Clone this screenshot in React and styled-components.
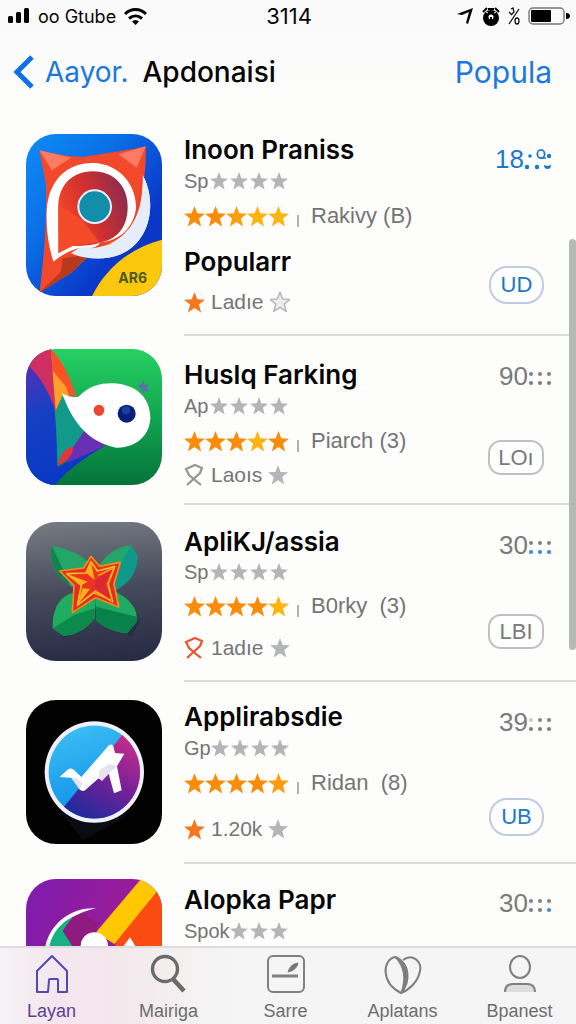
import React from "react";
import styled, { createGlobalStyle } from "styled-components";

const GlobalStyle = createGlobalStyle`
    * {
        box-sizing: border-box;
    }
    body {
        margin: 0;
        background: #fdfdfc;
        font-family: Inter, "Liberation Sans", sans-serif;
        color: #050505;
    }
    h1, h2, h3, p {
        margin: 0;
    }
    button {
        font: inherit;
        cursor: pointer;
    }
    a {
        text-decoration: none;
    }
    svg {
        display: block;
        flex: none;
    }
`;

const Screen = styled.div`
    display: flex;
    flex-direction: column;
    height: 100vh;
    position: relative;
    overflow: hidden;
`;

const StatusBar = styled.div`
    display: grid;
    grid-template-columns: 1fr auto 1fr;
    align-items: center;
    height: 32px;
    padding: 0 6px 0 8px;
    font-size: 18px;
    background: #fafafa;

    time {
        font-size: 22px;
    }
`;

const StatusGroup = styled.div`
    display: flex;
    align-items: center;
    gap: 8px;
    justify-content: ${(props) => props.$end ? "flex-end" : "flex-start"};
`;

const NavBar = styled.header`
    display: flex;
    align-items: center;
    height: 80px;
    padding: 0 24px 0 13px;
    font-size: 28px;
    background: linear-gradient(#fafafa, #fdfdfc);

    h1 {
        font-size: 28px;
        font-weight: 500;
        margin-left: 14px;
    }
`;

const NavLink = styled.a`
    display: flex;
    align-items: center;
    gap: 10px;
    color: #1b78dc;
    font-size: ${(props) => props.$big ? "30px" : "28px"};
    margin-left: ${(props) => props.$big ? "auto" : "0"};
`;

const List = styled.main`
    flex: 1;
    min-height: 0;
    overflow: hidden;
`;

const Row = styled.article`
    display: flex;
    height: ${(props) => props.$height}px;
    padding-left: 26px;
`;

const AppIcon = styled.svg`
    width: 136px;
    height: ${(props) => props.$height}px;
    margin-top: ${(props) => props.$top}px;
    border-radius: 30px;
`;

const Content = styled.div`
    display: flex;
    flex: 1;
    margin-left: 22px;
    border-bottom: 2px solid #dcdcdd;
    font-family: "Liberation Sans", Arial, sans-serif;
`;

const Info = styled.div`
    flex: 1;
    padding-top: ${(props) => props.$top}px;
    color: #747474;
    font-size: 22px;

    h2, h3 {
        font-family: Inter, "Liberation Sans", sans-serif;
        font-size: 26px;
        font-weight: 600;
        line-height: 32px;
        color: #050505;
        white-space: nowrap;
    }
    h3 {
        line-height: 52px;
    }
`;

const Genre = styled.div`
    display: flex;
    align-items: center;
    justify-content: space-between;
    width: 104px;
    height: ${(props) => props.$tight ? "28px" : "30px"};
    font-size: 20px;
`;

const Stars = styled.div`
    display: flex;
    gap: ${(props) => props.$gap}px;
`;

const Rating = styled.div`
    display: flex;
    align-items: center;
    height: 40px;
    white-space: pre;
`;

const Tick = styled.span`
    width: 2px;
    height: 12px;
    margin: 10px 12px 0 8px;
    background: #b0b0b0;
`;

const Foot = styled.div`
    display: flex;
    align-items: center;
    gap: 6px;
    width: 104px;
    height: 28px;
    margin-top: ${(props) => props.$top}px;
    font-size: 21px;

    svg:last-child {
        margin-left: auto;
    }
`;

const Side = styled.div`
    display: flex;
    flex-direction: column;
    align-items: flex-end;
    justify-content: space-between;
    padding: ${(props) => props.$top}px 24px ${(props) => props.$bottom}px 0;
`;

const Price = styled.div`
    display: flex;
    align-items: center;
    height: 32px;
    font-size: 26px;
    color: ${(props) => props.$blue ? "#1b78d0" : "#7a7a7a"};
`;

const GetButton = styled.button`
    width: ${(props) => props.$blue ? "55px" : "56px"};
    height: ${(props) => props.$blue ? "38px" : "35px"};
    margin-right: 8px;
    padding: 0;
    border: 2px solid ${(props) => props.$blue ? "#bfcbe0" : "#c0c0c0"};
    border-radius: ${(props) => props.$blue ? "18px" : "13px"};
    background: #fff;
    color: ${(props) => props.$blue ? "#1b78c8" : "#7a7a7a"};
    font-size: 22px;
    line-height: 30px;
`;

const ScrollThumb = styled.div`
    position: absolute;
    top: 239px;
    right: 0;
    width: 7px;
    height: 411px;
    border-radius: 4px;
    background: #b7b9b9;
`;

const TabBar = styled.nav`
    height: 78px;
    border-top: 2px solid #dddcde;
    background: linear-gradient(90deg, #f5f2f5 0%, #f4e6ee 10%, #f3e7ec 20%, #f3efef 30%, #f5f5f5 40%);
    overflow: hidden;
`;

const Tabs = styled.div`
    display: grid;
    grid-template-columns: repeat(5, 1fr);
    margin: 0 -2px 0 -7px;
`;

const Tab = styled.a`
    display: flex;
    flex-direction: column;
    align-items: center;
    gap: 4px;
    padding-top: 6px;
    font-family: "Liberation Sans", Arial, sans-serif;
    font-size: 18px;
    line-height: 22px;
    color: ${(props) => props.$active ? "#5a4290" : "#6d6d6d"};
`;

const STAR = "M12 1 L14.9 8.7 L23 9.1 L16.7 14.2 L18.9 22.4 L12 17.8 L5.1 22.4 L7.3 14.2 L1 9.1 L9.1 8.7 Z";

function Star({ size, color, outline }) {
    return (
        <svg width={size} height={size} viewBox="1 1 22 22" aria-hidden="true">
            <path d={STAR} fill={outline ? "#ececec" : color} stroke={outline ? color : "none"} strokeWidth="1.6" />
        </svg>
    )
}

function Ribbon({ color }) {
    return (
        <svg width="21" height="24" viewBox="0 0 21 24" fill="none" stroke={color} strokeWidth="2.2" aria-hidden="true">
            <path d="M3 22 L16 10 L18 5 L11 2 L2 6 L5 12 L17 22" />
        </svg>
    )
}

// the six little dots after the number
function Dots({ top, bottom }) {
    return (
        <svg width="24" height="20" viewBox="0 0 24 20" aria-hidden="true">
            {[3, 12, 21].map((x, i) => <circle key={x} cx={x} cy="8" r="2" fill={top[i]} />)}
            {[3, 12, 21].map((x, i) => <circle key={x} cx={x} cy="17" r="2.1" fill={bottom[i]} />)}
        </svg>
    )
}

function PercentDots() {
    return (
        <svg width="28" height="24" viewBox="0 0 28 24" fill="#1b78d0" aria-hidden="true">
            <circle cx="3" cy="20" r="2.2" />
            <circle cx="6" cy="9" r="1.8" />
            <circle cx="13" cy="20" r="2.2" />
            <ellipse cx="17" cy="7" rx="3.6" ry="4.2" fill="none" stroke="#1b78d0" strokeWidth="1.8" />
            <path d="M17 11 H22" stroke="#1b78d0" strokeWidth="1.6" />
            <circle cx="25" cy="9" r="2.2" />
            <path d="M20 18 L23 19 L27 18 a3.5 4 0 0 1 -7 0z" />
        </svg>
    )
}

function PinArt() {
    return (
        <>
            <defs>
                <linearGradient id="pinSky" x1="0" y1="0" x2="1" y2="1">
                    <stop offset="0" stopColor="#0d8df5" />
                    <stop offset="0.35" stopColor="#0a6fe6" />
                    <stop offset="0.7" stopColor="#0a38c8" />
                    <stop offset="1" stopColor="#0a34b8" />
                </linearGradient>
                <linearGradient id="pinRed" x1="0" y1="0.7" x2="1" y2="0.3">
                    <stop offset="0" stopColor="#fa4a28" />
                    <stop offset="0.5" stopColor="#d03030" />
                    <stop offset="1" stopColor="#8e2c4c" />
                </linearGradient>
            </defs>
            <rect x="30" y="27" width="408" height="486" fill="url(#pinSky)" />
            <path d="M380 150 C430 240 400 390 262 400 C220 402 190 392 165 380 L300 340 Z" fill="#e6edfa" />
            <path d="M70 76 C110 86 160 96 200 96 C260 86 330 78 389 64 C390 110 388 150 378 190 C375 290 320 350 225 386 L170 440 L70 503 C84 400 92 300 90 180 Z" fill="#f2492a" />
            <path d="M70 76 L165 98 L108 136 Z M389 64 L308 88 L362 128 Z" fill="#ff7a62" />
            <path d="M70 503 L140 400 L220 388 L170 440 Z" fill="#b83a1c" />
            <path d="M70 503 L108 410 L140 400 L135 440 Z" fill="#f2492a" />
            <path d="M165 384 L205 360 C290 376 345 340 368 262 C374 230 380 200 380 150 C430 240 400 390 262 400 C220 402 190 396 165 384 Z" fill="#e6edfa" />
            <path d="M112 410 C100 370 90 320 92 260 C96 160 160 112 232 114 C310 116 362 180 360 250 C358 330 290 366 225 366 C190 364 150 378 112 410 Z" fill="#fff" />
            <path d="M255 352 C310 340 335 300 335 245 C335 180 290 139 232 139 C165 139 125 185 127 250 L128 384 L170 362 C200 364 230 362 255 352 Z" fill="url(#pinRed)" />
            <path d="M127 240 L127 384 L170 362 L250 352 L200 285 Z" fill="#f54a2a" />
            <path d="M252 352 C310 348 355 310 362 240 L379 150 C385 280 330 360 225 370 C240 366 250 360 252 352 Z" fill="#ed4422" />
            <circle cx="236" cy="245" r="49" fill="#128daa" stroke="#e9f1ff" strokeWidth="6" />
            <path d="M228 513 C270 430 340 370 438 344 V513 Z" fill="#fcc80e" />
            <text x="350" y="473" textAnchor="middle" fontSize="42" fontWeight="700" fill="#4d5a1c">AR6</text>
        </>
    )
}

function BirdArt() {
    return (
        <>
            <defs>
                <linearGradient id="birdGreen" x1="0.5" y1="0" x2="0.5" y2="1">
                    <stop offset="0" stopColor="#27d063" />
                    <stop offset="0.5" stopColor="#12a550" />
                    <stop offset="1" stopColor="#04743a" />
                </linearGradient>
                <linearGradient id="birdBlue" x1="0" y1="0" x2="0.2" y2="1">
                    <stop offset="0" stopColor="#6a2cb0" />
                    <stop offset="0.5" stopColor="#1440c4" />
                    <stop offset="1" stopColor="#0a38c4" />
                </linearGradient>
            </defs>
            <rect x="30" y="27" width="408" height="408" fill="url(#birdGreen)" />
            <path d="M30 27 H104 L128 380 L175 350 L268 318 C210 350 160 385 116 435 H30 Z" fill="url(#birdBlue)" />
            <path d="M40 80 C54 50 74 30 104 27 L120 215 C100 160 75 110 40 80 Z" fill="#cf3061" />
            <path d="M104 27 C140 60 160 110 182 172 L140 160 L120 215 Z" fill="#fa5226" />
            <path d="M110 92 L150 140 L160 170 L140 165 L119 210 Z" fill="#ffa02a" />
            <path d="M120 215 L140 170 L205 272 L172 320 L124 378 Z" fill="#12998a" />
            <path d="M205 272 L268 318 L150 370 L172 320 Z" fill="#6830b4" />
            <path d="M124 378 C132 345 148 322 172 320 C172 345 150 365 124 378 Z" fill="#e3343a" />
            <path d="M138 160 C160 172 174 173 188 170 C220 135 260 128 295 130 C370 136 403 180 403 235 C400 295 350 325 300 323 C210 305 168 240 138 160 Z" fill="#fff" />
            <ellipse cx="249" cy="211" rx="16" ry="17" fill="#ef4535" />
            <circle cx="332" cy="221" r="27" fill="#08207c" />
            <circle cx="330" cy="211" r="12" fill="#1b40a0" />
            <path d="M364 134 L374 135 L382 121 L386 134 L398 132 L392 143 L400 155 L386 153 L378 160 L376 148 Z" fill="#5a72a8" />
        </>
    )
}

function FlowerArt() {
    return (
        <>
            <defs>
                <linearGradient id="slate" x1="0.4" y1="0" x2="0.5" y2="1">
                    <stop offset="0" stopColor="#747880" />
                    <stop offset="0.5" stopColor="#454a5b" />
                    <stop offset="1" stopColor="#272b45" />
                </linearGradient>
            </defs>
            <rect x="30" y="21" width="408" height="417" fill="url(#slate)" />
            <path d="M115 280 L140 372 L240 300 L345 365 L372 318 L300 240 Z" fill="#20243a" opacity="0.5" />
            <path d="M108 93 C150 100 195 115 225 150 L240 210 L165 215 C120 180 98 150 108 93 Z" fill="#23a768" />
            <path d="M108 93 L165 215 C120 180 98 150 108 93 Z" fill="#128350" />
            <path d="M345 91 L365 124 C362 170 345 200 300 225 L235 215 L250 150 C275 115 305 95 345 91 Z" fill="#24a668" />
            <path d="M345 91 L365 124 C362 170 345 200 300 225 L290 190 Z" fill="#0e998a" />
            <path d="M165 235 L240 250 L236 310 C210 345 175 360 143 363 L110 340 C108 290 125 250 165 235 Z" fill="#20ad62" />
            <path d="M110 340 L175 300 L236 280 L236 310 C210 345 175 360 143 363 Z" fill="#0b8a4b" />
            <path d="M240 240 L300 230 C345 255 365 280 362 320 L334 355 C290 350 260 335 240 315 Z" fill="#20ab62" />
            <path d="M240 275 L362 305 V320 L334 355 C290 350 260 335 240 315 Z" fill="#08824a" />
            <path d="M225 124 L251 154 L313 142 L294 207 L308 276 L239 248 L169 293 L174 211 L131 168 L203 159 Z" fill="#df3023" stroke="#f98b14" strokeWidth="5" strokeLinejoin="round" />
            <path d="M225 140 L244 168 L296 155 L276 207 L290 260 L238 229 L184 271 L196 211 L152 176 L210 174 Z" fill="#e83420" stroke="#ffc222" strokeWidth="5" strokeLinejoin="round" />
            <path d="M225 140 L236 195 L212 175 Z M152 176 L215 200 L196 211 Z M184 271 L222 222 L200 220 Z" fill="#fdaf18" />
            <path d="M240 195 L290 160 L265 210 L290 260 L235 215 Z" fill="#dc2830" />
            <path d="M246 182 L291 159 M234 234 L285 255" stroke="#ff9d16" strokeWidth="5" />
        </>
    )
}

function PlaneArt() {
    return (
        <>
            <defs>
                <linearGradient id="planeSky" x1="0" y1="0" x2="0.3" y2="1">
                    <stop offset="0" stopColor="#43c4f5" />
                    <stop offset="1" stopColor="#0a8de8" />
                </linearGradient>
                <linearGradient id="planeNight" x1="0.8" y1="0" x2="0.3" y2="1">
                    <stop offset="0.1" stopColor="#cf2f88" />
                    <stop offset="0.55" stopColor="#7a2098" />
                    <stop offset="1" stopColor="#1c2a9c" />
                </linearGradient>
                <clipPath id="planeDisc"><ellipse cx="235" cy="245" rx="137" ry="140" /></clipPath>
            </defs>
            <rect x="30" y="28" width="408" height="434" fill="#020203" />
            <path d="M130 360 L200 450 L330 380 L235 245 Z" fill="#0a0c14" />
            <ellipse cx="235" cy="245" rx="149" ry="153" fill="#f0effa" />
            <g clipPath="url(#planeDisc)">
                <rect x="90" y="90" width="290" height="310" fill="url(#planeSky)" />
                <path d="M322 130 L140 355 L200 400 H400 V90 Z" fill="url(#planeNight)" />
            </g>
            <path d="M131 260 L157 236 Q165 232 174 239 L196 260 L278 165 Q288 158 292 168 L297 188 L325 190 L303 228 L317 300 L294 309 L278 250 L258 271 L248 264 L208 299 Q200 306 191 298 L166 262 Z" fill="#fff" />
            <path d="M250 240 L280 220 L303 228 L278 250 L258 271 L248 264 Z M166 262 L180 262 L200 280 L191 298 Z" fill="#e6e2f0" />
        </>
    )
}

function CanvasArt() {
    return (
        <>
            <defs>
                <linearGradient id="canvasViolet" x1="0" y1="0" x2="1" y2="0.5">
                    <stop offset="0" stopColor="#7c1cb0" />
                    <stop offset="1" stopColor="#a81c8c" />
                </linearGradient>
            </defs>
            <rect x="30" y="567" width="408" height="408" fill="url(#canvasViolet)" />
            <path d="M438 585 V975 H280 L300 740 Z" fill="#fa4b10" />
            <path d="M375 567 H400 L422 605 L295 762 L240 727 Z" fill="#ffc800" />
            <path d="M86 785 C90 720 150 650 240 655 C190 665 160 685 140 722 L120 785 Z" fill="#fff" />
            <path d="M98 785 C100 740 130 700 170 680 L140 722 L180 785 Z" fill="#17b184" />
            <path d="M170 680 L200 668 L245 700 L240 735 L190 785 H180 L140 722 Z" fill="#8f1a80" />
            <circle cx="235" cy="768" r="41" fill="#fff" />
            <path d="M310 785 L342 742 L368 785 Z" fill="#fff" />
        </>
    )
}

const GRAY = "#808080";
const BLUE = "#4488d4";
const ORANGE = "#fb8c0a";
const YELLOW = "#fdb40e";

const apps = [
    {
        title: "Inoon Praniss", genre: "Sp", grayStars: 4, rated: "Rakivy (B)", stars: [ORANGE, ORANGE, "#fc9f0c", YELLOW, YELLOW],
        tagline: "Popularr", mark: "star", note: "Ladıe", price: "18", button: "UD", buttonBlue: true, noteOutline: true,
        art: PinArt, viewBox: "30 27 408 486", height: 224, iconTop: 22, iconHeight: 162, infoTop: 22, sideTop: 31, sideBottom: 30, footTop: 0,
    },
    {
        title: "Huslq Farking", genre: "Ap", grayStars: 4, rated: "Piarch (3)", stars: [ORANGE, ORANGE, ORANGE, YELLOW, ORANGE],
        mark: "#959595", note: "Laoıs", price: "90", dots: [[GRAY, GRAY, GRAY], [GRAY, GRAY, GRAY]], button: "LOı",
        art: BirdArt, viewBox: "30 27 408 408", height: 169, iconTop: 13, iconHeight: 136, infoTop: 23, sideTop: 24, sideBottom: 28, footTop: 0,
    },
    {
        title: "ApliKJ/assia", genre: "Sp", grayStars: 4, rated: "B0rky  (3)", stars: [ORANGE, ORANGE, ORANGE, ORANGE, YELLOW], tight: true,
        mark: "#e4572f", note: "1adıe", price: "30", dots: [[GRAY, GRAY, GRAY], [BLUE, BLUE, BLUE]], button: "LBI",
        art: FlowerArt, viewBox: "30 21 408 417", height: 177, iconTop: 17, iconHeight: 139, infoTop: 21, sideTop: 24, sideBottom: 31, footTop: 8,
    },
    {
        title: "Applirabsdie", genre: "Gp", grayStars: 4, rated: "Ridan  (8)", stars: [ORANGE, ORANGE, ORANGE, ORANGE, "#fd9d0c"],
        mark: "star", note: "1.20k", price: "39", dots: [["#ccc", GRAY, GRAY], [GRAY, GRAY, GRAY]], button: "UB", buttonBlue: true,
        art: PlaneArt, viewBox: "30 28 408 434", height: 182, iconTop: 18, iconHeight: 144, infoTop: 19, sideTop: 24, sideBottom: 26, footTop: 12,
    },
    {
        title: "Alopka Papr", genre: "Spok", grayStars: 3, price: "30", dots: [[GRAY, GRAY, GRAY], [GRAY, GRAY, BLUE]],
        art: CanvasArt, viewBox: "30 567 408 408", height: 169, iconTop: 15, iconHeight: 136, infoTop: 20, sideTop: 23, sideBottom: 28, footTop: 0,
    },
];

function AppRow({ app }) {
    const Art = app.art
    return (
        <Row $height={app.height}>
            <AppIcon viewBox={app.viewBox} preserveAspectRatio="none" $height={app.iconHeight} $top={app.iconTop} aria-hidden="true">
                <Art />
            </AppIcon>
            <Content>
                <Info $top={app.infoTop}>
                    <h2>{app.title}</h2>
                    <Genre $tight={app.tight}>
                        <span>{app.genre}</span>
                        <Stars $gap={2}>
                            {Array.from({ length: app.grayStars }, (_, i) => <Star key={i} size={18} color="#b4b5b7" />)}
                        </Stars>
                    </Genre>
                    {app.rated && (
                        <Rating>
                            <Stars $gap={0}>
                                {app.stars.map((color, i) => <Star key={i} size={21} color={color} />)}
                            </Stars>
                            <Tick />
                            <span>{app.rated}</span>
                        </Rating>
                    )}
                    {app.tagline && <h3>{app.tagline}</h3>}
                    {app.note && (
                        <Foot $top={app.footTop}>
                            {app.mark === "star" ? <Star size={21} color="#f6781e" /> : <Ribbon color={app.mark} />}
                            <span>{app.note}</span>
                            <Star size={20} color="#b4b5b7" outline={app.noteOutline} />
                        </Foot>
                    )}
                </Info>
                <Side $top={app.sideTop} $bottom={app.sideBottom}>
                    <Price $blue={!app.dots}>
                        <span>{app.price}</span>
                        {app.dots ? <Dots top={app.dots[0]} bottom={app.dots[1]} /> : <PercentDots />}
                    </Price>
                    {app.button && <GetButton $blue={app.buttonBlue}>{app.button}</GetButton>}
                </Side>
            </Content>
        </Row>
    )
}

function Status() {
    return (
        <StatusBar>
            <StatusGroup>
                <svg width="22" height="16" viewBox="0 0 22 16" aria-hidden="true">
                    <rect x="0" y="8" width="5" height="7" rx="1.5" />
                    <rect x="8" y="4" width="5" height="11" rx="1.5" />
                    <rect x="16" y="0" width="5" height="15" rx="1.5" />
                </svg>
                <span>oo Gtube</span>
                <svg width="23" height="17" viewBox="0 0 23 17" fill="none" stroke="#000" strokeWidth="3" aria-hidden="true">
                    <path d="M1 6 C7 0 16 0 22 6" />
                    <path d="M5 10.5 C9 7 14 7 18 10.5" />
                    <path d="M8 13.5 Q11.500 10.500 15 13.500 L11.500 17Z" fill="#000" stroke="none" />
                </svg>
            </StatusGroup>
            <time>3114</time>
            <StatusGroup $end>
                <svg width="18" height="18" viewBox="0 0 18 18" aria-hidden="true">
                    <path d="M1 7 L17 1 L12 17 L10 16 L13 5 L6 8 Z" />
                </svg>
                <svg width="18" height="19" viewBox="0 0 18 19" aria-hidden="true">
                    <circle cx="9" cy="11" r="8" />
                    <path d="M1 5 L5 1 M17 5 L13 1 M6 2 L12 2" stroke="#000" strokeWidth="2" />
                    <circle cx="9" cy="10" r="2.5" fill="#fff" />
                    <path d="M4 5 L6 6 M14 5 L12 6" stroke="#fff" />
                    <rect x="8" y="10" width="2" height="3" />
                </svg>
                <svg width="12" height="19" viewBox="0 0 12 19" fill="none" stroke="#111" strokeWidth="1.3" aria-hidden="true">
                    <path d="M11 2 L1 17 M1 5 L4 8 M3 2 L5 1 L6 5 L3 8" />
                    <ellipse cx="9" cy="14" rx="2" ry="3" />
                </svg>
                <svg width="42" height="18" viewBox="0 0 42 18" aria-hidden="true">
                    <rect x="1" y="1" width="35" height="16" rx="4" fill="none" stroke="#777" strokeWidth="1.4" />
                    <rect x="3" y="3" width="20" height="12" rx="1" />
                    <path d="M38 6 Q42 6 42 9 Q42 12 38 12Z" />
                </svg>
            </StatusGroup>
        </StatusBar>
    )
}

const tabs = [
    {
        label: "Layan", active: true,
        icon: <path d="M3 17 L18 2 L33 17 V38 H24 V26 Q24 25 23 25 H16 Q15 25 15 26 L14 38 H3 Z" strokeLinejoin="round" />,
    },
    {
        label: "Mairiga",
        icon: <g strokeWidth="3.4" stroke="#6b6b6b"><circle cx="14" cy="15" r="12.5" /><path d="M22 25 L33 37" strokeWidth="4.6" /></g>,
    },
    {
        label: "Sarre",
        icon: <><rect x="0" y="2" width="36" height="36" rx="5" /><path d="M4 22 H30" strokeWidth="3" /><path d="M20 18 Q22 10 30 9 Q29 16 20 18Z" fill="#777" strokeWidth="1" /></>,
    },
    {
        label: "Aplatans",
        icon: <><path d="M10 3 C-3 6 -4 29 16 39 C26 27 25 10 10 3 Z" /><path d="M18 6 C27 -1 37 7 35 17 C33 28 24 36 16 39" /><path d="M11 3 C24 10 25 24 17 38 C21 23 20 14 11 3 Z" fill="#777" /></>,
    },
    {
        label: "Bpanest",
        icon: <><ellipse cx="18" cy="13" rx="10" ry="11" /><path d="M3 38 Q3 30 11 30 H25 Q33 30 33 38 Z" fill="#ddd" stroke="none" /><path d="M3 38 Q3 30 11 30 H25 Q33 30 33 38" /></>,
    },
];

function App() {
    return (
        <>
            <GlobalStyle />
            <Screen>
                <Status />
                <NavBar>
                    <NavLink href="#back">
                        <svg width="22" height="34" viewBox="0 0 22 34" fill="none" stroke="#0f6fe8" strokeWidth="5" aria-hidden="true">
                            <path d="M19 2 L4 17 L19 32" />
                        </svg>
                        Aayor.
                    </NavLink>
                    <h1>Apdonaisi</h1>
                    <NavLink href="#popular" $big>Popula</NavLink>
                </NavBar>
                <List>
                    {apps.map((app) => <AppRow key={app.title} app={app} />)}
                </List>
                <ScrollThumb />
                <TabBar>
                    <Tabs>
                        {tabs.map((tab) => (
                            <Tab key={tab.label} href={`#${tab.label}`} $active={tab.active}>
                                <svg width="40" height="42" viewBox="-2 0 40 42" fill="none" stroke={tab.active ? "#5149ae" : "#808080"} strokeWidth="2" aria-hidden="true">
                                    {tab.icon}
                                </svg>
                                {tab.label}
                            </Tab>
                        ))}
                    </Tabs>
                </TabBar>
            </Screen>
        </>
    )
}

export default App
